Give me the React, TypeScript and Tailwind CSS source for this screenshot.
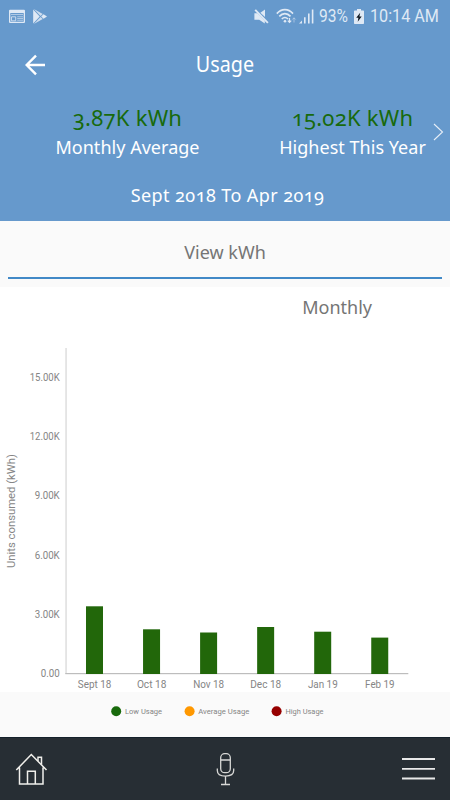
const BARS = [
  { label: 'Sept 18', top: 606.3, width: 33.5 },
  { label: 'Oct 18', top: 629.3, width: 29.5 },
  { label: 'Nov 18', top: 632.5, width: 31 },
  { label: 'Dec 18', top: 627, width: 31 },
  { label: 'Jan 19', top: 631.7, width: 29.8 },
  { label: 'Feb 19', top: 637.6, width: 29.5 },
]

const TICKS = [
  { label: '15.00K', y: 377.5, width: 30 },
  { label: '12.00K', y: 436.7, width: 30 },
  { label: '9.00K', y: 495.9, width: 25 },
  { label: '6.00K', y: 555.1, width: 25 },
  { label: '3.00K', y: 614.3, width: 25 },
  { label: '0.00', y: 673.5, width: 19 },
]

export default function App() {
  return (
    <div className="flex h-[800px] w-[450px] flex-col overflow-hidden bg-white font-['Noto_Sans',sans-serif]">
      <header className="h-[221px] shrink-0 bg-[#6699cc] text-white">
        <StatusBar />
        <div className="grid h-[66px] grid-cols-[70px_1fr_70px] items-center">
          <button className="flex justify-center" aria-label="Back">
            <svg width="22" height="22" viewBox="0 0 22 22" fill="none" stroke="white" strokeWidth="2.4">
              <path d="M21 11H2.5M12 1.7 2.7 11l9.3 9.3" />
            </svg>
          </button>
          <h1 className="-mt-0.5 text-center text-[21px] leading-[30px]">
            <span className="inline-block scale-x-[.94]">Usage</span>
          </h1>
        </div>

        <div className="relative h-[72px] overflow-hidden pl-[15px]">
          <div className="flex w-[450px]">
            <Stat value="3.87K kWh" label="Monthly Average" />
            <Stat value="15.02K kWh" label="Highest This Year" />
          </div>
          <svg className="absolute top-[25px] right-[6px]" width="11" height="18" viewBox="0 0 11 18" fill="none" stroke="#e6eef7" strokeWidth="1.1">
            <path d="M1 1l8.5 8L1 17" />
          </svg>
        </div>

        <p className="mt-[11px] pl-[5px] text-center text-[18px] leading-[28px] tracking-[.42px] oldstyle-nums">
          Sept 2018 To Apr 2019
        </p>
      </header>

      <div className="h-[66px] shrink-0 bg-[#fafafa] px-2 pt-[17px]">
        <div className="h-[41px] border-b-2 border-[#4189c7] text-center text-[18px] leading-[28px] text-[#757575]">
          View kWh
        </div>
      </div>

      <main className="h-[405px] shrink-0">
        <div className="flex h-[49px] justify-end pt-[6px] pr-[78px] text-[18px] leading-[28px] text-[#757575]">
          Monthly
        </div>
        <Chart />
      </main>

      <div className="h-[45px] shrink-0 bg-[#fafafa]">
        <svg className="block font-[Roboto,sans-serif]" width="450" height="45" viewBox="0 692 450 45" fontSize="7.7" fill="#858585">
          <circle cx="116.2" cy="711.3" r="5" fill="#186a0c" />
          <text x="125" y="714.2" textLength="37" lengthAdjust="spacingAndGlyphs">Low Usage</text>
          <circle cx="189.6" cy="711.3" r="5" fill="#ff9800" />
          <text x="198.3" y="714.2" textLength="51" lengthAdjust="spacingAndGlyphs">Average Usage</text>
          <circle cx="276.6" cy="711.3" r="5" fill="#960000" />
          <text x="285.5" y="714.2" textLength="38" lengthAdjust="spacingAndGlyphs">High Usage</text>
        </svg>
      </div>

      <BottomNav />
    </div>
  )
}

function Stat({ value, label }: { value: string; label: string }) {
  return (
    <div className="w-[225px] text-center">
      <div className="pt-[3px] text-[22px] leading-[32px] tracking-[.25px] text-[#186a0c] oldstyle-nums">{value}</div>
      <div className="text-[18px] leading-[28px] tracking-[.03px]">{label}</div>
    </div>
  )
}

function StatusBar() {
  return (
    <div className="flex h-8 items-center justify-between pr-[11px] pl-[9px] font-[Roboto,sans-serif] text-[#dfe9f5]">
      <div className="flex items-center gap-[8px]">
        <svg width="16" height="14" viewBox="0 0 16 14" fill="currentColor">
          <path fillRule="evenodd" d="M1 .8h14a1 1 0 0 1 1 1V13a1 1 0 0 1-1 1H1a1 1 0 0 1-1-1V1.8a1 1 0 0 1 1-1ZM1.3 4v8.7h13.4V4Z" />
          <path d="M2 5h12v1H2zM8.2 7.3H14v1H8.2zM8.2 9H14v1H8.2zM8.2 10.8H14v1H8.2z" opacity=".6" />
          <path d="M2.500 7.800h4.200v4H2.500z" fill="none" stroke="currentColor" strokeWidth=".8" />
        </svg>
        <svg width="14" height="15" viewBox="0 0 14 15" fill="currentColor">
          <path d="M.2.6v13.8L6.7 7.500Z" />
          <path d="M.8 0 9.800 5 7.500 7ZM.8 15l9-5-2.300-2Z" opacity=".85" />
          <path d="M10.500 5.300 14 7.500l-3.500 2.200L8.200 7.500Z" />
        </svg>
      </div>
      <div className="flex items-center">
        <svg width="15" height="15" viewBox="0 0 15 15" fill="currentColor">
          <path d="M.4 4.300h3l7.400 7.500v2.700L5.200 10.800H.4Z" />
          <path d="M11 .5v7.500L6.400 3.700Z" />
          <path d="m1.200.9 12.700 12.900" stroke="currentColor" strokeWidth="1.900" />
        </svg>
        <svg className="ml-[7px]" width="21" height="17" viewBox="0 0 21 17" fill="none" stroke="currentColor" strokeWidth="1.600">
          <path d="M.8 5.600C5.500.3 12.300.3 17 5.600M3.300 8.400c3.300-3.700 7.900-3.700 11.200 0M5.800 11c2-2 4.200-2 6.200 0" />
          <circle cx="9" cy="13.200" r="1.300" fill="currentColor" stroke="none" />
          <path d="M13.500 10v4.500m-1.700-1.800 1.700 1.800 1.700-1.800" strokeWidth="1.200" />
          <path d="M18 14.500V9.800m-1.600 1.700L18 9.800l1.600 1.700" strokeWidth="1" opacity=".5" />
        </svg>
        <svg className="ml-[2px]" width="15" height="15" viewBox="0 0 15 15" fill="currentColor">
          <path d="M0 14.500 3 11.500v3zM5 8.300h1.600v6.200H5zM9 4.500h1.600v10H9zM12.800.5h1.600v14h-1.600z" />
        </svg>
        <span className="ml-[5px] w-[31px] text-[19px] leading-8">
          <span className="inline-block origin-left scale-x-[.82]">93%</span>
        </span>
        <svg className="ml-[4px]" width="10" height="15" viewBox="0 0 10 15">
          <path d="M3 0h4v1.500h2.200a.8.8 0 0 1 .8.8v12a.7.700 0 0 1-.7.700H.7a.7.700 0 0 1-.7-.7v-12a.8.8 0 0 1 .8-.8H3Z" fill="currentColor" />
          <path d="M6.200 3.800 2.200 8.800h2.200l-.7 4 4-5.200H5.400Z" fill="#101820" />
        </svg>
        <span className="ml-[6px] w-[69px] text-[19px] leading-8 whitespace-nowrap">
          <span className="inline-block origin-left scale-x-[.85]">10:14 AM</span>
        </span>
      </div>
    </div>
  )
}

function Chart() {
  return (
    <svg className="block font-[Roboto,sans-serif]" width="450" height="356" viewBox="0 336 450 356" fontSize="10.4" fill="#858585">
      <text x="-568" y="15" fontSize="11.6" textLength="114" lengthAdjust="spacingAndGlyphs" transform="rotate(-90)">Units consumed (kWh)</text>
      {TICKS.map((t) => (
        <text key={t.label} x={59.700 - t.width} y={t.y + 3.500} textLength={t.width} lengthAdjust="spacingAndGlyphs">{t.label}</text>
      ))}
      <rect x="65.300" y="348" width="1.500" height="326" fill="#dedede" />
      <rect x="65.300" y="673" width="343" height="1.200" fill="#bdbdbd" />
      {BARS.map((b, i) => (
        <g key={b.label}>
          <rect x={86 + i * 57.050} y={b.top} width="17" height={674 - b.top} fill="#22670a" />
          <text x={94.600 + i * 57.050 - b.width / 2} y="688" textLength={b.width} lengthAdjust="spacingAndGlyphs">{b.label}</text>
        </g>
      ))}
    </svg>
  )
}

function BottomNav() {
  return (
    <nav className="flex h-[63px] shrink-0 items-center justify-between border-t border-[#14212b] bg-[#272e34] pr-[15px] pl-[15px]">
      <svg width="33" height="33" viewBox="0 0 33 33" fill="none" stroke="#f0efeb" strokeWidth="1.500">
        <path d="M1.300 17 16.300 1.500l15.200 15.500M4.500 14.500V31H28V14.500" />
        <path d="M12.500 31V18.200h7.800V31M23 8V4.300h3.500V11.500" />
      </svg>
      <svg width="19" height="33" viewBox="0 0 19 33" fill="none" stroke="#d8d8d6" strokeWidth="1.300">
        <rect x="4.700" y=".7" width="9.600" height="19" rx="4" />
        <path d="M4.700 7h9.600M1.300 15.500v2c0 3.500 3 5.600 8.200 5.600s8.200-2.100 8.200-5.600v-2M9.500 23.100v8M5 31.500h9" />
      </svg>
      <svg width="33" height="24" viewBox="0 0 33 24" stroke="#e9e9e9" strokeWidth="1.800">
        <path d="M0 2h33M0 11.800h33M0 21.500h33" />
      </svg>
    </nav>
  )
}
